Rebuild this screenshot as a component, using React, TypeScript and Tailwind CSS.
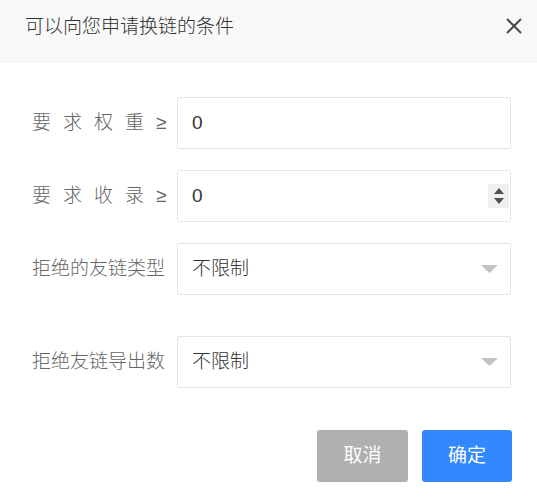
const font = { fontFamily: '"Liberation Sans", "Noto Sans CJK SC", sans-serif' };

function Caret() {
    return (
        <svg width="17" height="8" viewBox="0 0 17 8" className="shrink-0">
            <path d="M0 0 L17 0 L8.5 8 Z" fill="#c2c2c2" />
        </svg>
    );
}

function Spinner() {
    return (
        <div className="w-[21px] h-[24px] bg-[#efefef] flex flex-col items-center justify-center gap-[4px]">
            <svg width="10" height="6" viewBox="0 0 10 6">
                <path d="M5 0 L10 6 L0 6 Z" fill="#505050" />
            </svg>
            <svg width="10" height="6" viewBox="0 0 10 6">
                <path d="M0 0 L10 0 L5 6 Z" fill="#505050" />
            </svg>
        </div>
    );
}

function Row({ label, spaced, children, className }: { label: string; spaced?: boolean; children: React.ReactNode; className?: string }) {
    return (
        <div className={"flex items-center " + (className || "")}>
            <div className={"w-[145px] shrink-0 text-[19px] font-light text-[#666] whitespace-nowrap " + (spaced ? "tracking-[12px]" : "")}>
                {label}
            </div>
            <div className="flex-1 h-[52px] border border-[#e6e6e6] rounded-[2px] flex items-center pl-[14px] pr-[12px] text-[19px] font-light text-[#333]">
                {children}
            </div>
        </div>
    );
}

export default function App() {
    return (
        <div className="w-[537px] h-[498px] bg-white" style={font}>
            <div className="h-[62px] bg-[#f8f8f8] border-b border-[#ececec] flex items-start justify-between pl-[25px] pr-[15px] pt-[15px]">
                <span className="text-[19px] leading-[24px] font-light text-[#333]">可以向您申请换链的条件</span>
                <svg width="16" height="16" viewBox="0 0 16 16" className="mt-[3px]">
                    <path d="M1 1 L15 15 M15 1 L1 15" stroke="#4a4a4a" strokeWidth="2" />
                </svg>
            </div>

            <div className="pl-[32px] pr-[26px] pt-[35px]">
                <Row label="要求权重≥" spaced className="mb-[21px]">
                    <span>0</span>
                </Row>
                <Row label="要求收录≥" spaced className="mb-[21px]">
                    <span className="flex-1">0</span>
                    <div className="-mr-[11px]">
                        <Spinner />
                    </div>
                </Row>
                <Row label="拒绝的友链类型" className="mb-[41px]">
                    <span className="flex-1">不限制</span>
                    <Caret />
                </Row>
                <Row label="拒绝友链导出数">
                    <span className="flex-1">不限制</span>
                    <Caret />
                </Row>

                <div className="flex justify-end gap-[14px] mt-[42px] -mr-[1px]">
                    <button className="w-[91px] h-[52px] rounded-[3px] bg-[#b0b0b0] text-white text-[19px]">取消</button>
                    <button className="w-[90px] h-[52px] rounded-[3px] bg-[#3388ff] text-white text-[19px]">确定</button>
                </div>
            </div>
        </div>
    );
}
